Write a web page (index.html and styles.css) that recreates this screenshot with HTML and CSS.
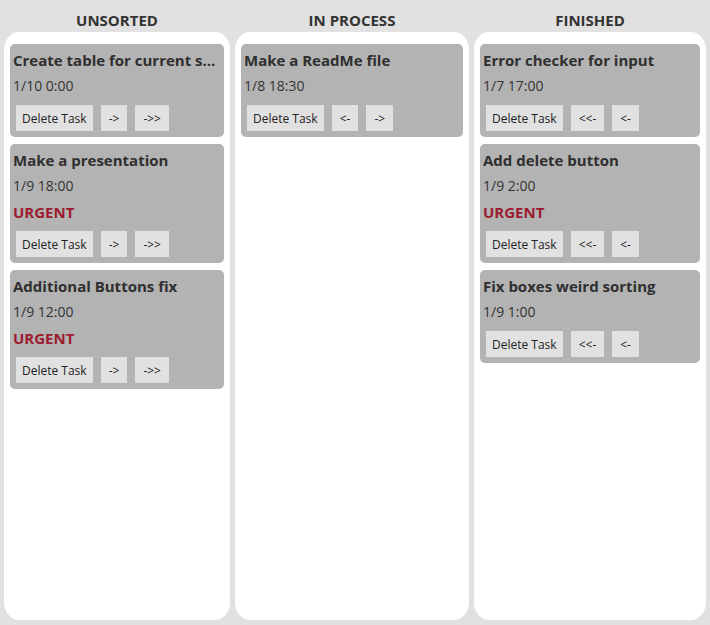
FILE: index.html
```html
<!DOCTYPE html>
<html>
<head>
<meta charset="utf-8">
<link rel="stylesheet" href="styles.css">
</head>
<body>
<div class="board">
  <section class="column">
    <h2 class="col-title">UNSORTED</h2>
    <div class="col-box">
      <div class="card">
        <div class="card-title">Create table for current sorting display</div>
        <div class="card-date">1/10 0:00</div>
        <div class="card-actions"><button class="btn btn-del">Delete Task</button><button class="btn">-&gt;</button><button class="btn">-&gt;&gt;</button></div>
      </div>
      <div class="card">
        <div class="card-title">Make a presentation</div>
        <div class="card-date">1/9 18:00</div>
        <div class="card-urgent">URGENT</div>
        <div class="card-actions"><button class="btn btn-del">Delete Task</button><button class="btn">-&gt;</button><button class="btn">-&gt;&gt;</button></div>
      </div>
      <div class="card">
        <div class="card-title">Additional Buttons fix</div>
        <div class="card-date">1/9 12:00</div>
        <div class="card-urgent">URGENT</div>
        <div class="card-actions"><button class="btn btn-del">Delete Task</button><button class="btn">-&gt;</button><button class="btn">-&gt;&gt;</button></div>
      </div>
    </div>
  </section>
  <section class="column">
    <h2 class="col-title">IN PROCESS</h2>
    <div class="col-box">
      <div class="card">
        <div class="card-title">Make a ReadMe file</div>
        <div class="card-date">1/8 18:30</div>
        <div class="card-actions"><button class="btn btn-del">Delete Task</button><button class="btn">&lt;-</button><button class="btn">-&gt;</button></div>
      </div>
    </div>
  </section>
  <section class="column">
    <h2 class="col-title">FINISHED</h2>
    <div class="col-box">
      <div class="card">
        <div class="card-title">Error checker for input</div>
        <div class="card-date">1/7 17:00</div>
        <div class="card-actions"><button class="btn btn-del">Delete Task</button><button class="btn">&lt;&lt;-</button><button class="btn">&lt;-</button></div>
      </div>
      <div class="card">
        <div class="card-title">Add delete button</div>
        <div class="card-date">1/9 2:00</div>
        <div class="card-urgent">URGENT</div>
        <div class="card-actions"><button class="btn btn-del">Delete Task</button><button class="btn">&lt;&lt;-</button><button class="btn">&lt;-</button></div>
      </div>
      <div class="card">
        <div class="card-title">Fix boxes weird sorting</div>
        <div class="card-date">1/9 1:00</div>
        <div class="card-actions"><button class="btn btn-del">Delete Task</button><button class="btn">&lt;&lt;-</button><button class="btn">&lt;-</button></div>
      </div>
    </div>
  </section>
</div>
</body>
</html>
```

FILE: styles.css
```css
html, body {
  margin: 0;
  padding: 0;
  height: 100%;
}
body {
  background: #e1e1e1;
  font-family: "Open Sans", "Noto Sans", sans-serif;
  color: #333333;
}
.board {
  box-sizing: border-box;
  height: 625px;
  padding: 0 4px 5px 4px;
  display: grid;
  grid-template-columns: 226fr 234fr 232fr;
  column-gap: 5px;
}
.column {
  display: flex;
  flex-direction: column;
  min-width: 0;
}
.col-title {
  margin: 0;
  height: 32px;
  line-height: 40px;
  font-size: 15px;
  font-weight: 700;
  text-align: center;
  color: #333333;
}
.col-box {
  flex: 1;
  background: #ffffff;
  border-radius: 15px / 18px;
  padding: 12px 6px 6px 6px;
  display: flex;
  flex-direction: column;
  gap: 7px;
  min-width: 0;
}
.card {
  background: #b3b3b3;
  border-radius: 5px;
  padding: 3px 3px 6px 3px;
  min-width: 0;
}
.card-title {
  font-size: 15px;
  font-weight: 700;
  line-height: 26px;
  white-space: nowrap;
  overflow: hidden;
  text-overflow: ellipsis;
  color: #2f2f2f;
}
.card-date {
  font-size: 14px;
  line-height: 26px;
  color: #333333;
}
.card-urgent {
  font-size: 15px;
  font-weight: 700;
  line-height: 26px;
  color: #9b1b30;
}
.card-actions {
  margin-top: 6px;
  padding-left: 3px;
  display: flex;
  gap: 8px;
}
.btn {
  height: 26px;
  border: none;
  background: #e1e1e1;
  color: #222222;
  font-family: "Open Sans", "Noto Sans", sans-serif;
  font-size: 12px;
  padding: 0 8px;
  margin: 0;
  border-radius: 0;
}
.btn-del {
  padding: 0 6px;
}
```
